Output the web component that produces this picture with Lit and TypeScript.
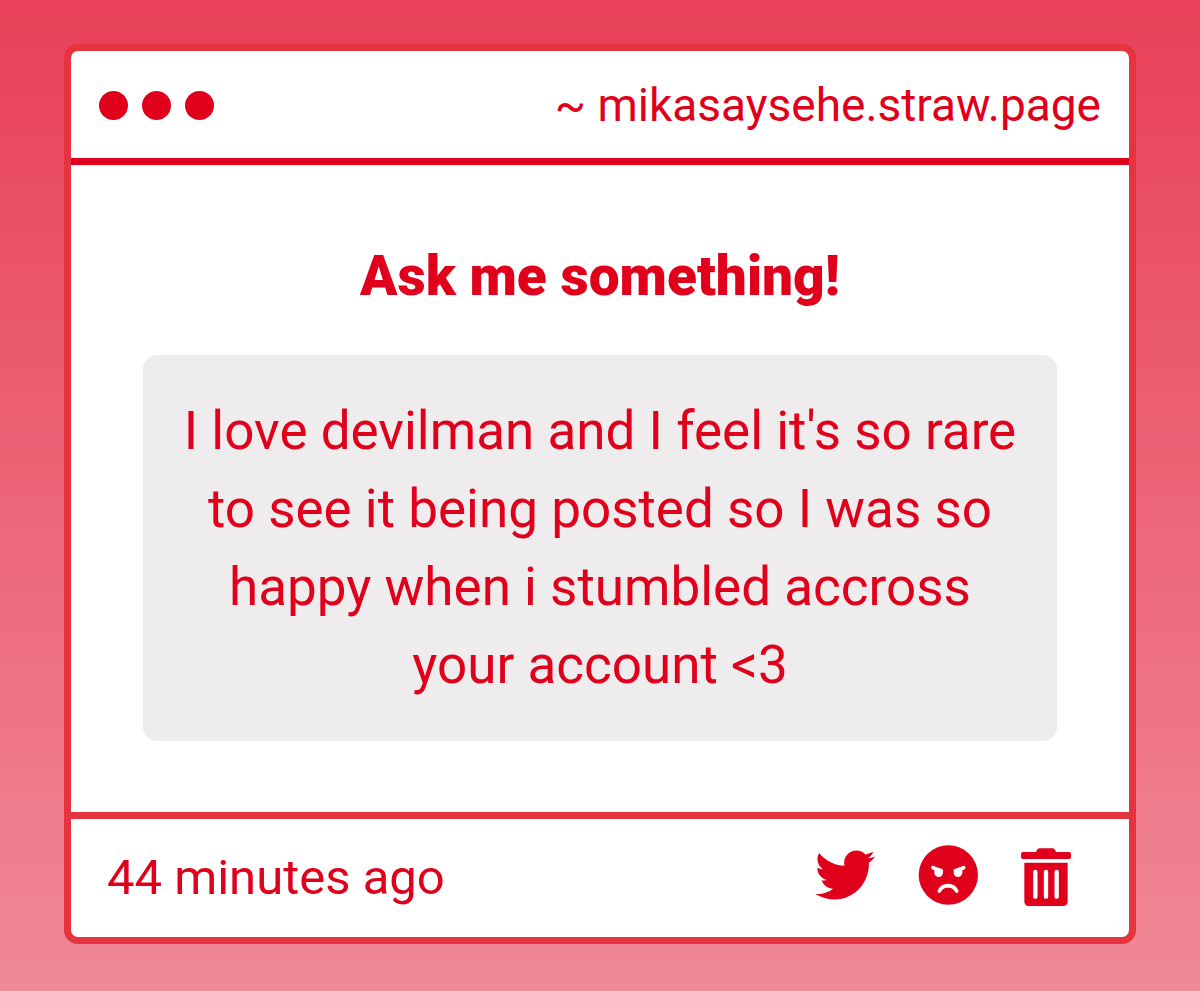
import { LitElement, html, css, svg } from "lit";
import { customElement, property } from "lit/decorators.js";

const twitterIcon = svg`
  <path d="M23.954 4.569c-.885.389-1.83.654-2.825.775 1.014-.611 1.794-1.574 2.163-2.723-.951.555-2.005.959-3.127 1.184-.896-.959-2.173-1.559-3.591-1.559-2.717 0-4.92 2.203-4.92 4.917 0 .39.045.765.127 1.124C7.691 8.094 4.066 6.13 1.64 3.161c-.427.722-.666 1.561-.666 2.475 0 1.71.87 3.213 2.188 4.096-.807-.026-1.566-.248-2.228-.616v.061c0 2.385 1.693 4.374 3.946 4.827-.413.111-.849.171-1.296.171-.314 0-.615-.03-.916-.086.631 1.953 2.445 3.377 4.604 3.417-1.68 1.319-3.809 2.105-6.102 2.105-.39 0-.779-.023-1.17-.067 2.189 1.394 4.768 2.209 7.557 2.209 9.054 0 13.999-7.496 13.999-13.986 0-.209 0-.42-.015-.63.961-.689 1.8-1.56 2.46-2.548l-.047-.02z"/>`;

@customElement("app-root")
export class AppRoot extends LitElement {
  @property() site = "~ mikasaysehe.straw.page";
  @property() prompt = "Ask me something!";
  @property() message =
    "I love devilman and I feel it's so rare to see it being posted so I was so happy when i stumbled accross your account <3";
  @property() time = "44 minutes ago";

  static styles = css`
    :host {
      --ink: #e0001c;
      --frame: #e5333f;
      display: flex;
      box-sizing: border-box;
      min-height: 100vh;
      padding: 44px 64px 48px;
      background: linear-gradient(#e84058, #f08997);
      color: var(--ink);
      font-family: Roboto, "Liberation Sans", sans-serif;
    }
    .window {
      flex: 1;
      min-width: 0;
      display: flex;
      flex-direction: column;
      border: 7px solid var(--frame);
      border-radius: 14px;
      background: #fff;
    }
    .bar {
      display: flex;
      align-items: center;
      justify-content: space-between;
      padding: 24px 28px 23px;
      border-bottom: 7px solid var(--ink);
      font-size: 46px;
      line-height: 60px;
    }
    .dots {
      display: flex;
      gap: 14px;
    }
    .dot {
      width: 29px;
      height: 29px;
      border-radius: 50%;
      background: var(--ink);
    }
    .content {
      flex: 1;
      display: flex;
      flex-direction: column;
      gap: 40px;
      padding: 72px 72px 71px;
      text-align: center;
    }
    .title {
      margin: 0;
      font-size: 55px;
      font-weight: 900;
      line-height: 78px;
    }
    .message {
      margin: 0;
      padding: 37px 36px;
      border-radius: 14px;
      background: #eeecec;
      font-size: 53px;
      line-height: 78px;
    }
    .footer {
      display: flex;
      align-items: center;
      justify-content: space-between;
      padding: 24px 58px 24px 36px;
      border-top: 7px solid var(--frame);
      font-size: 49px;
      line-height: 70px;
    }
    .actions {
      display: flex;
      align-items: center;
      gap: 43px;
      padding-bottom: 6px;
    }
    .action {
      display: flex;
      padding: 0;
      border: 0;
      background: none;
      color: inherit;
      cursor: pointer;
    }
    .icon {
      width: 60px;
      height: 60px;
      fill: currentColor;
      overflow: visible;
    }
    .icon.narrow {
      width: 50px;
    }
    .hole {
      fill: #fff;
    }
    .line {
      fill: none;
      stroke: #fff;
      stroke-width: 11;
      stroke-linecap: round;
    }
    .slot {
      stroke-width: 13;
    }
  `;

  render() {
    return html`
      <main class="window">
        <header class="bar">
          <div class="dots" aria-hidden="true">
            <span class="dot"></span><span class="dot"></span><span class="dot"></span>
          </div>
          <span>${this.site}</span>
        </header>
        <section class="content">
          <h1 class="title">${this.prompt}</h1>
          <p class="message">${this.message}</p>
        </section>
        <footer class="footer">
          <time>${this.time}</time>
          <div class="actions">
            <a class="action" href="#share" aria-label="Share on Twitter">
              <svg class="icon" viewBox="0 0 24 24">${twitterIcon}</svg>
            </a>
            <button class="action" type="button" aria-label="Report">
              <svg class="icon" viewBox="0 0 180 180">
                <circle cx="91" cy="90" r="89" />
                <path class="line" d="M45 68 70 77M137 68 112 77M64 138Q71 123 90 122Q109 123 116 138" />
                <path class="hole" d="M49 70 74 78A13 13 0 1 1 49 83ZM133 70 108 78A13 13 0 1 0 133 83Z" />
              </svg>
            </button>
            <button class="action" type="button" aria-label="Delete">
              <svg class="icon narrow" viewBox="0 -6 150 180">
                <path d="M6 15H45Q49 4 56 4H94Q101 4 105 15H144Q150 15 150 21V30Q150 36 144 36H6Q0 36 0 30V21Q0 15 6 15Z" />
                <path d="M10 47H140V163Q140 177 126 177H24Q10 177 10 163Z" />
                <path class="line slot" d="M43 75V149M75 75V149M107 75V149" />
              </svg>
            </button>
          </div>
        </footer>
      </main>
    `;
  }
}
